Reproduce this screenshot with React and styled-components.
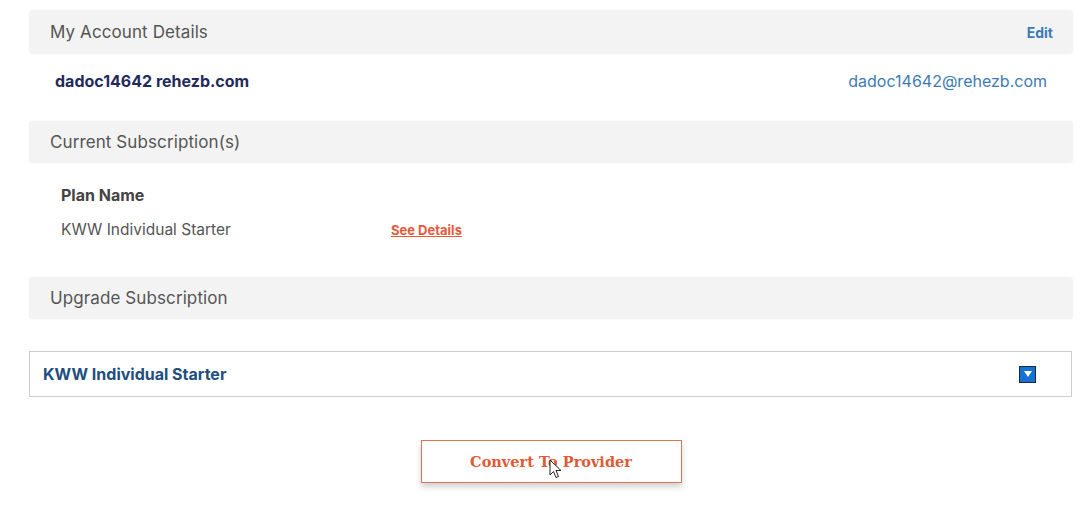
import React from 'react'
import styled, { createGlobalStyle } from 'styled-components'

const GlobalStyle = createGlobalStyle`
  body {
    margin: 0;
    background: #ffffff;
    font-family: "Inter", "Open Sans", sans-serif;
  }
`

const Page = styled.div`
  width: 1090px;
  height: 506px;
  box-sizing: border-box;
  padding: 10px 17px 0 29px;
  position: relative;
  overflow: hidden;
`

const SectionBar = styled.div`
  height: ${p => p.h || 44}px;
  background: #f3f3f3;
  border-radius: 4px;
  box-shadow: 0 0 3px rgba(0, 0, 0, 0.04);
  display: flex;
  align-items: center;
  justify-content: space-between;
  padding: 0 20px 0 21px;
`

const SectionTitle = styled.h2`
  margin: 0;
  font-size: 17px;
  font-weight: 400;
  color: #555555;
  letter-spacing: 0.1px;
`

const EditLink = styled.a`
  font-size: 14px;
  font-weight: 700;
  color: #3b7bb6;
  cursor: pointer;
`

const AccountRow = styled.div`
  height: 54px;
  display: flex;
  align-items: center;
  justify-content: space-between;
  padding: 0 26px 0 26px;
  margin-bottom: 13px;
`

const AccountName = styled.span`
  font-size: 16px;
  font-weight: 700;
  color: #1f2b5c;
`

const AccountEmail = styled.span`
  font-size: 16px;
  color: #3d7ab3;
`

const PlanTable = styled.div`
  display: grid;
  grid-template-columns: 330px 1fr;
  grid-auto-rows: 20px;
  row-gap: 14px;
  padding: 22px 32px 0 32px;
  margin-bottom: 38px;
  align-items: center;
`

const PlanHead = styled.div`
  font-size: 16px;
  font-weight: 700;
  color: #444444;
`

const PlanCell = styled.div`
  font-size: 15.5px;
  color: #555555;
`

const DetailsLink = styled.a`
  font-size: 13px;
  font-weight: 700;
  color: #e8593b;
  text-decoration: underline;
  cursor: pointer;
`

const SelectBox = styled.div`
  margin-top: 32px;
  height: 46px;
  box-sizing: border-box;
  border: 1px solid #cccccc;
  display: flex;
  align-items: center;
  justify-content: space-between;
  padding: 0 35px 0 13px;
  margin-right: 1px;
`

const SelectText = styled.span`
  font-size: 16px;
  font-weight: 700;
  color: #1e4f7e;
`

const ArrowBox = styled.span`
  width: 17px;
  height: 17px;
  box-sizing: border-box;
  background: #1572d3;
  border: 1px solid #1a2a3a;
  display: flex;
  align-items: center;
  justify-content: center;
`

const ButtonRow = styled.div`
  display: flex;
  justify-content: center;
  padding-top: 43px;
`

const ConvertButton = styled.button`
  position: relative;
  width: 261px;
  height: 43px;
  background: #ffffff;
  border: 1px solid #e27454;
  box-shadow: 0 4px 6px rgba(0, 0, 0, 0.18);
  font-family: "DejaVu Serif", "Liberation Serif", serif;
  font-size: 14.5px;
  font-weight: 700;
  color: #e05a35;
  cursor: pointer;
`

const Cursor = styled.svg`
  position: absolute;
  left: 127px;
  top: 18px;
`

export default function App() {
  return (
    <>
      <GlobalStyle />
      <Page>
        <SectionBar>
          <SectionTitle>My Account Details</SectionTitle>
          <EditLink>Edit</EditLink>
        </SectionBar>
        <AccountRow>
          <AccountName>dadoc14642 rehezb.com</AccountName>
          <AccountEmail>dadoc14642@rehezb.com</AccountEmail>
        </AccountRow>

        <SectionBar h={42}>
          <SectionTitle>Current Subscription(s)</SectionTitle>
        </SectionBar>
        <PlanTable>
          <PlanHead>Plan Name</PlanHead>
          <div />
          <PlanCell>KWW Individual Starter</PlanCell>
          <div>
            <DetailsLink>See Details</DetailsLink>
          </div>
        </PlanTable>

        <SectionBar h={42}>
          <SectionTitle>Upgrade Subscription</SectionTitle>
        </SectionBar>

        <SelectBox>
          <SelectText>KWW Individual Starter</SelectText>
          <ArrowBox>
            <svg width="8" height="6" viewBox="0 0 8 6">
              <path d="M0 0 H8 L4 6 Z" fill="#ffffff" />
            </svg>
          </ArrowBox>
        </SelectBox>

        <ButtonRow>
          <ConvertButton>
            Convert To Provider
            <Cursor width="13" height="20" viewBox="0 0 13 20">
              <path
                d="M1 1 L1 16 L4.5 12.5 L7 18.5 L9.5 17.5 L7 11.5 L12 11.5 Z"
                fill="#ffffff"
                stroke="#222222"
                strokeWidth="1"
                strokeLinejoin="round"
              />
            </Cursor>
          </ConvertButton>
        </ButtonRow>
      </Page>
    </>
  )
}
